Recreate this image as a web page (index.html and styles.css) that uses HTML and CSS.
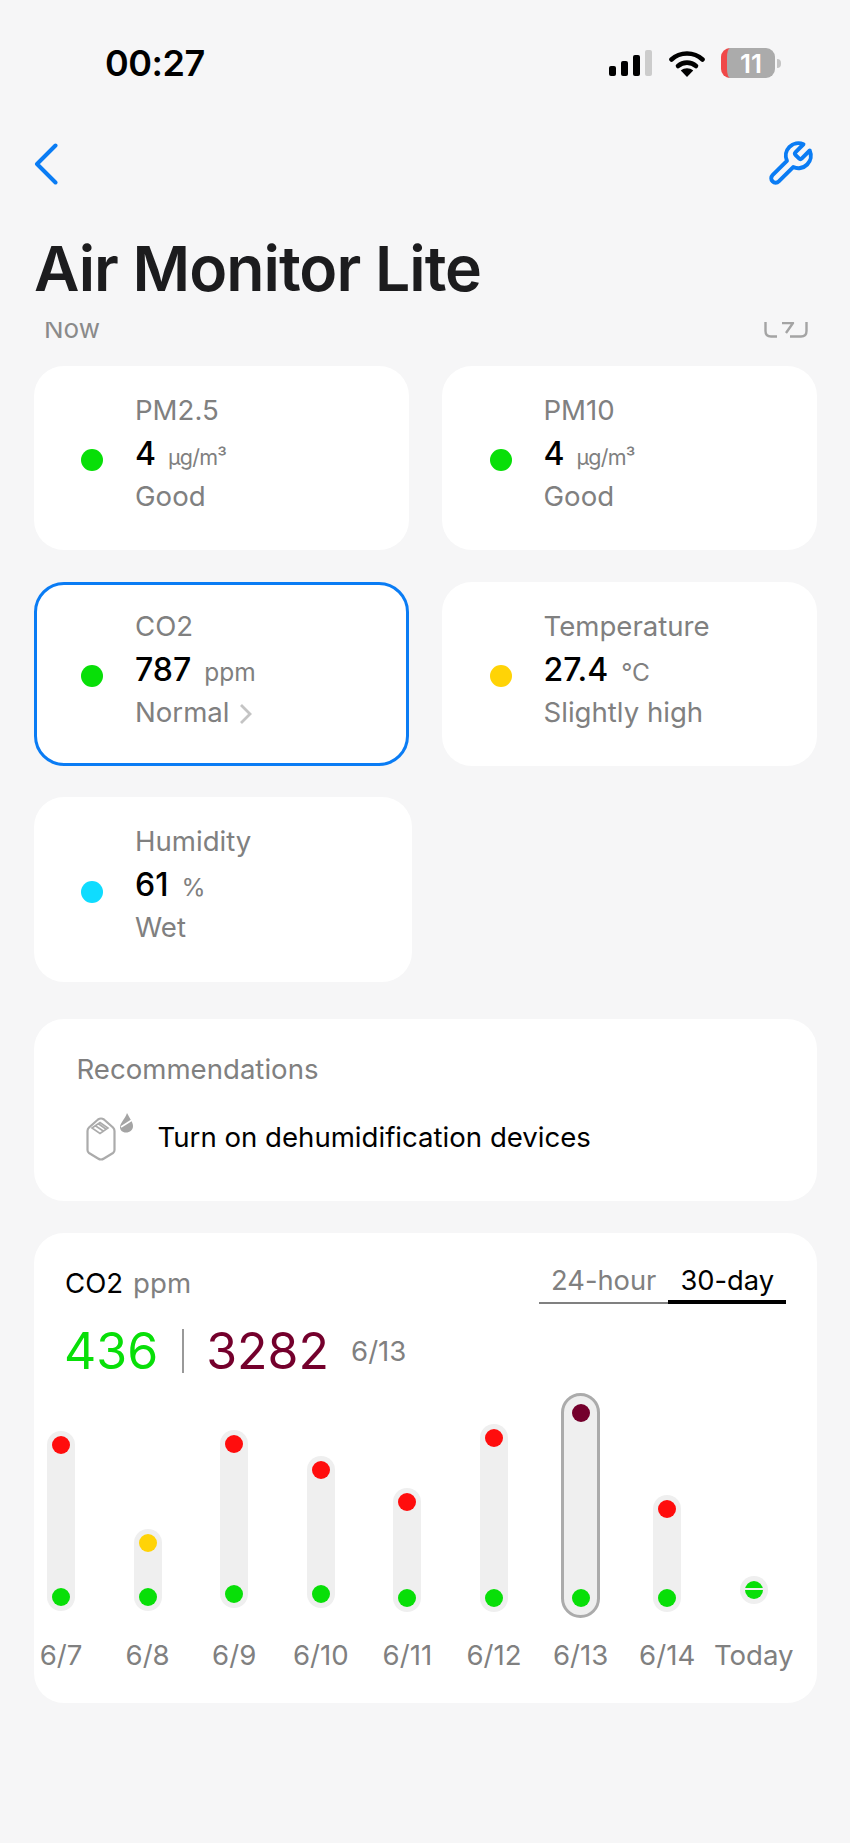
FILE: index.html
```html
<!DOCTYPE html>
<html lang="en">
<head>
    <meta charset="UTF-8">
    <meta name="viewport" content="width=device-width, initial-scale=1.0">
    <title>Air Monitor Lite</title>
    <link rel="stylesheet" href="styles.css">
</head>
<body>
    <header class="status-bar">
        <span class="time">00:27</span>
        <div class="status-icons">
            <div class="signal">
                <i class="s1"></i><i class="s2"></i><i class="s3"></i><i class="s4"></i>
            </div>
            <svg class="wifi" width="36" height="27" viewBox="0 0 36 27">
                <path d="M2.5 9.5C11 1.5 25 1.5 33.5 9.5" fill="none" stroke="#000" stroke-width="4.6" stroke-linecap="round"/>
                <path d="M9 16C14 11.5 22 11.5 27 16" fill="none" stroke="#000" stroke-width="4.6" stroke-linecap="round"/>
                <path d="M18 27L11.8 20.6C15.5 17.6 20.5 17.6 24.2 20.6Z" fill="#000"/>
            </svg>
            <div class="battery">
                <div class="battery-body"><span>11</span></div>
                <div class="battery-cap"></div>
            </div>
        </div>
    </header>

    <nav class="nav">
        <svg width="24" height="42" viewBox="0 0 24 42">
            <path d="M21.5 2.5L3 21L21.5 39.5" fill="none" stroke="#0a7cf4" stroke-width="4" stroke-linecap="round" stroke-linejoin="round"/>
        </svg>
        <svg width="50" height="50" viewBox="0 0 24 24" fill="none" stroke="#0a7cf4" stroke-width="1.9" stroke-linecap="round" stroke-linejoin="round">
            <path d="M14.7 6.3a1 1 0 0 0 0 1.4l1.6 1.6a1 1 0 0 0 1.4 0l3.77-3.77a6 6 0 0 1-7.94 7.94l-6.91 6.91a2.12 2.12 0 0 1-3-3l6.91-6.91a6 6 0 0 1 7.94-7.94l-3.76 3.76z"/>
        </svg>
    </nav>

    <h1 class="title">Air Monitor Lite</h1>

    <div class="now-row">
        <span>Now</span>
        <svg width="44" height="16" viewBox="0 0 44 16" fill="none" stroke="#a4a4a4" stroke-width="2.4">
            <path d="M1.5 0V9Q1.5 14.500 7 14.500H13M26 14.500H37Q42.500 14.500 42.500 9V0"/>
            <path d="M18 1H29L22 11" stroke-linejoin="round"/>
        </svg>
    </div>

    <main class="content">
        <section class="metrics">
            <div class="card metric">
                <i class="dot big green"></i>
                <div class="metric-text">
                    <div class="label">PM2.5</div>
                    <div class="value">4<small class="dense">µg/m³</small></div>
                    <div class="label">Good</div>
                </div>
            </div>
            <div class="card metric">
                <i class="dot big green"></i>
                <div class="metric-text">
                    <div class="label">PM10</div>
                    <div class="value">4<small class="dense">µg/m³</small></div>
                    <div class="label">Good</div>
                </div>
            </div>
            <div class="card metric selected">
                <i class="dot big green"></i>
                <div class="metric-text">
                    <div class="label">CO2</div>
                    <div class="value">787<small>ppm</small></div>
                    <div class="label">Normal
                        <svg class="more" width="13" height="22" viewBox="0 0 13 22">
                            <path d="M2 2L11 11L2 20" fill="none" stroke="#c4c4c4" stroke-width="2.800"/>
                        </svg>
                    </div>
                </div>
            </div>
            <div class="card metric">
                <i class="dot big yellow"></i>
                <div class="metric-text">
                    <div class="label">Temperature</div>
                    <div class="value">27.4<small>°C</small></div>
                    <div class="label">Slightly high</div>
                </div>
            </div>
            <div class="card metric humidity">
                <i class="dot big cyan"></i>
                <div class="metric-text">
                    <div class="label">Humidity</div>
                    <div class="value">61<small>%</small></div>
                    <div class="label">Wet</div>
                </div>
            </div>
        </section>

        <section class="card recs">
            <div class="label">Recommendations</div>
            <div class="rec-item">
                <svg width="48" height="48" viewBox="0 0 48 48" fill="none">
                    <path d="M3 14.500L12 6.500Q15 4.500 18 6.500L27 14.500Q28.500 16 28.500 18V37Q28.500 39 27 40L18 45.500Q15 47.500 12 45.500L3 40Q1.500 39 1.500 37V18Q1.500 16 3 14.500Z" stroke="#ababab" stroke-width="2.200"/>
                    <path d="M6 15L14 9.500L22 15L14 20.500Z M9 12.500L18 18.500 M12 10.500L20.500 16.500" stroke="#ababab" stroke-width="1.600"/>
                    <path d="M41 0C44 6 47 9 47 13C47 17 44 19.500 40 19.500C36 19.500 34 17 34 14C34 10 39 6 41 0Z" fill="#a4a4a4"/>
                    <path d="M35 14L46 7" stroke="#fff" stroke-width="1.500"/>
                </svg>
                <span>Turn on dehumidification devices</span>
            </div>
        </section>

        <section class="card chart">
            <div class="chart-head">
                <div class="chart-title">CO2<span>ppm</span></div>
                <div class="tabs">
                    <div class="tab">24-hour</div>
                    <div class="tab active">30-day</div>
                </div>
            </div>
            <div class="range">
                <span class="low">436</span>
                <i class="sep"></i>
                <span class="high">3282</span>
                <span class="range-date">6/13</span>
            </div>
            <div class="plot">
                <div class="col"><div class="bar" style="margin-top:38px;height:180px"><i class="dot red"></i><i class="dot green"></i></div></div>
                <div class="col"><div class="bar" style="margin-top:136px;height:82px"><i class="dot yellow"></i><i class="dot green"></i></div></div>
                <div class="col"><div class="bar" style="margin-top:37px;height:178px"><i class="dot red"></i><i class="dot green"></i></div></div>
                <div class="col"><div class="bar" style="margin-top:63px;height:152px"><i class="dot red"></i><i class="dot green"></i></div></div>
                <div class="col"><div class="bar" style="margin-top:95px;height:124px"><i class="dot red"></i><i class="dot green"></i></div></div>
                <div class="col"><div class="bar" style="margin-top:31px;height:188px"><i class="dot red"></i><i class="dot green"></i></div></div>
                <div class="col"><div class="bar current" style="margin-top:0;height:225px"><i class="dot maroon"></i><i class="dot green"></i></div></div>
                <div class="col"><div class="bar" style="margin-top:102px;height:117px"><i class="dot red"></i><i class="dot green"></i></div></div>
                <div class="col"><div class="bar" style="margin-top:183px;height:28px"><i class="dot green split"></i></div></div>
                <div class="day">6/7</div>
                <div class="day">6/8</div>
                <div class="day">6/9</div>
                <div class="day">6/10</div>
                <div class="day">6/11</div>
                <div class="day">6/12</div>
                <div class="day">6/13</div>
                <div class="day">6/14</div>
                <div class="day">Today</div>
            </div>
        </section>
    </main>
</body>
</html>
```

FILE: styles.css
```css
body {
    margin: 0;
    background-color: #f6f6f7;
    font-family: Inter, "Liberation Sans", sans-serif;
    color: #000;
}
i {
    display: block;
}
.status-bar {
    display: flex;
    justify-content: space-between;
    align-items: center;
    height: 30px;
    padding: 48px 69px 0 105px;
}
.time {
    font-size: 36px;
    font-weight: 600;
    letter-spacing: -0.5px;
}
.status-icons {
    display: flex;
    align-items: center;
}
.signal {
    display: flex;
    align-items: flex-end;
    gap: 5px;
    height: 26px;
    margin-right: 17px;
}
.signal i {
    width: 7px;
    background-color: #000;
    border-radius: 2px;
}
.s1 { height: 10px; }
.s2 { height: 15px; }
.s3 { height: 21px; }
.signal .s4 {
    height: 26px;
    background-color: #ccc;
}
.wifi {
    margin-right: 16px;
}
.battery {
    display: flex;
    align-items: center;
    gap: 2px;
}
.battery-body {
    display: flex;
    justify-content: center;
    align-items: center;
    box-sizing: border-box;
    width: 54px;
    height: 30px;
    border-left: 6px solid #f04848;
    border-radius: 9px;
    background-color: #ababab;
    color: #fff;
    font-size: 26px;
    font-weight: 600;
}
.battery-cap {
    width: 4px;
    height: 9px;
    border-radius: 0 4px 4px 0;
    background-color: #c4c4c4;
}
.nav {
    display: flex;
    justify-content: space-between;
    align-items: center;
    height: 50px;
    padding: 61px 35px 0 34px;
}
.title {
    margin: 49px 0 0 34px;
    height: 60px;
    font-size: 62.500px;
    line-height: 60px;
    font-weight: 600;
    letter-spacing: -1px;
    color: #1c1c1e;
}
.now-row {
    display: flex;
    justify-content: space-between;
    align-items: flex-end;
    height: 16px;
    margin-top: 24px;
    padding: 0 42px 0 44px;
    overflow: hidden;
    font-size: 26px;
    line-height: 24px;
    color: #8a8a8a;
}
.now-row span {
    margin-bottom: -3px;
}
.content {
    padding: 28px 33px 0 33.500px;
}
.card {
    background-color: #fff;
    border-radius: 30px;
}
.metrics {
    display: grid;
    grid-template-columns: 375px 375px;
    column-gap: 33.500px;
    row-gap: 32px;
    grid-auto-rows: 184px;
}
.metric {
    display: flex;
    align-items: center;
    gap: 32px;
    box-sizing: border-box;
    padding-left: 47.500px;
}
.metric.selected {
    border: 3px solid #0a7cf4;
    padding-left: 44.500px;
}
.metric.humidity {
    width: 378.500px;
    height: 185px;
    margin-top: -1px;
}
.metric-text {
    padding-bottom: 10px;
}
.label {
    font-size: 27.600px;
    line-height: 43px;
    color: #808080;
    white-space: nowrap;
}
.more {
    margin-left: 2px;
    vertical-align: -3px;
}
.value {
    font-size: 32px;
    line-height: 43px;
    font-weight: 500;
    white-space: nowrap;
}
.value small {
    margin-left: 13px;
    font-size: 24.500px;
    line-height: 1;
    font-weight: 400;
    color: #808080;
}
.value small.dense {
    margin-left: 12px;
    font-size: 21.500px;
    letter-spacing: -0.8px;
}
.dot {
    flex: none;
    width: 18px;
    height: 18px;
    border-radius: 50%;
}
.dot.big {
    width: 22px;
    height: 22px;
    margin-top: 4px;
}
.green { background-color: #08df08; }
.yellow { background-color: #ffd306; }
.cyan { background-color: #0fdcff; }
.red { background-color: #ff0d0d; }
.maroon { background-color: #74002c; }
.recs {
    box-sizing: border-box;
    height: 182px;
    margin-top: 37px;
    padding: 29px 43px 0;
}
.rec-item {
    display: flex;
    align-items: center;
    gap: 24px;
    margin-top: 22px;
    padding-left: 9px;
    font-size: 27.600px;
}
.chart {
    position: relative;
    box-sizing: border-box;
    height: 470px;
    margin-top: 32px;
    padding-top: 30px;
}
.chart-head {
    display: flex;
    justify-content: space-between;
    padding: 0 31px 0 31.500px;
}
.chart-title {
    font-size: 27.600px;
    line-height: 40px;
}
.chart-title span {
    margin-left: 10px;
    color: #808080;
}
.tabs {
    display: flex;
}
.tab {
    box-sizing: border-box;
    height: 41px;
    padding: 0 12px;
    border-bottom: 2px solid #808080;
    font-size: 27.300px;
    line-height: 36px;
    color: #808080;
}
.tab.active {
    border-bottom: 4px solid #000;
    color: #000;
}
.range {
    display: flex;
    align-items: center;
    height: 44px;
    margin-top: 25px;
    padding-left: 30.500px;
    font-size: 50px;
}
.low {
    color: #08df08;
}
.sep {
    width: 2px;
    height: 44px;
    margin: 0 22px 0 24px;
    background-color: #999;
}
.high {
    color: #74002c;
}
.range-date {
    margin-left: 22px;
    font-size: 27.600px;
    color: #808080;
}
.plot {
    display: grid;
    grid-template-columns: repeat(9, 56px);
    column-gap: 30.6px;
    justify-items: center;
    margin: 19.500px 0 0 -0.500px;
}
.col {
    height: 242.500px;
}
.bar {
    display: flex;
    flex-direction: column;
    justify-content: space-between;
    align-items: center;
    box-sizing: border-box;
    width: 28px;
    padding: 5px;
    border-radius: 14px;
    background-color: #efefef;
}
.bar.current {
    width: 39px;
    padding: 8px 0;
    border: 3px solid #ababab;
    border-radius: 20px;
}
.dot.split {
    background: linear-gradient(#08df08 7px, #efefef 7px, #efefef 9px, #08df08 9px);
}
.day {
    font-size: 27.600px;
    line-height: 40px;
    color: #808080;
    white-space: nowrap;
}
```
